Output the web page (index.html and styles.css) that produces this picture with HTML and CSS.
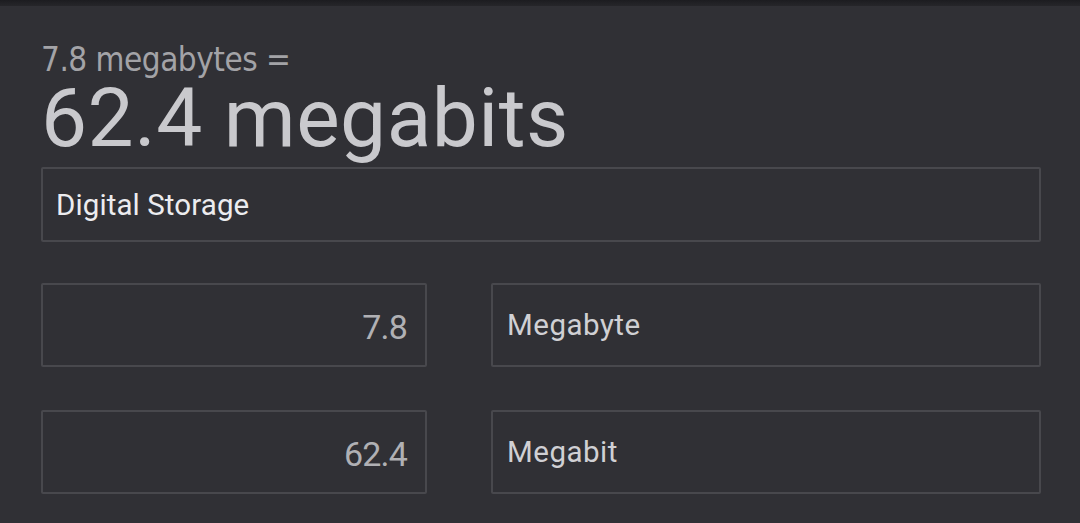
FILE: index.html
```html
<!DOCTYPE html>
<html lang="en">
<head>
<meta charset="utf-8">
<title>Unit converter</title>
<link rel="stylesheet" href="styles.css">
</head>
<body>
<div class="topbar"></div>
<main class="converter">
  <div class="from">7.8 megabytes =</div>
  <div class="result">62.4 megabits</div>
  <div class="field category">Digital Storage</div>
  <div class="pairs">
    <div class="field value">7.8</div>
    <div class="field unit">Megabyte</div>
    <div class="field value">62.4</div>
    <div class="field unit">Megabit</div>
  </div>
</main>
</body>
</html>
```

FILE: styles.css
```css
html, body {
  margin: 0;
  padding: 0;
  background: #303035;
  height: 100%;
  overflow: hidden;
}
.topbar {
  height: 6px;
  background: linear-gradient(#1c1c20, #26262a);
}
.converter {
  padding: 0 39px 0 41px;
  font-family: Roboto, "Open Sans", sans-serif;
}
.from {
  font-family: "DejaVu Sans Condensed", "DejaVu Sans", sans-serif;
  font-size: 33px;
  line-height: 34px;
  margin-top: 37px;
  color: #a3a3a7;
  letter-spacing: -0.5px;
}
.result {
  font-size: 82px;
  line-height: 80px;
  color: #c9c9cd;
  margin-top: 1px;
  letter-spacing: 0.5px;
}
.field {
  box-sizing: border-box;
  border: 2px solid #48484d;
  border-radius: 2px;
  display: flex;
  align-items: center;
}
.category {
  height: 75px;
  margin-top: 9px;
  padding-left: 13px;
  color: #ececef;
  font-size: 29.5px;
  letter-spacing: 0.1px;
}
.pairs {
  display: grid;
  grid-template-columns: 386px 550px;
  column-gap: 64px;
  row-gap: 43px;
  margin-top: 41px;
}
.pairs .field {
  height: 84px;
}
.value {
  justify-content: flex-end;
  padding-right: 18px;
  color: #b0b0b4;
  font-size: 34px;
  letter-spacing: -0.8px;
  padding-top: 3px;
}
.unit {
  padding-left: 14px;
  color: #d0d0d4;
  font-size: 29.5px;
  letter-spacing: 0.5px;
}
```
